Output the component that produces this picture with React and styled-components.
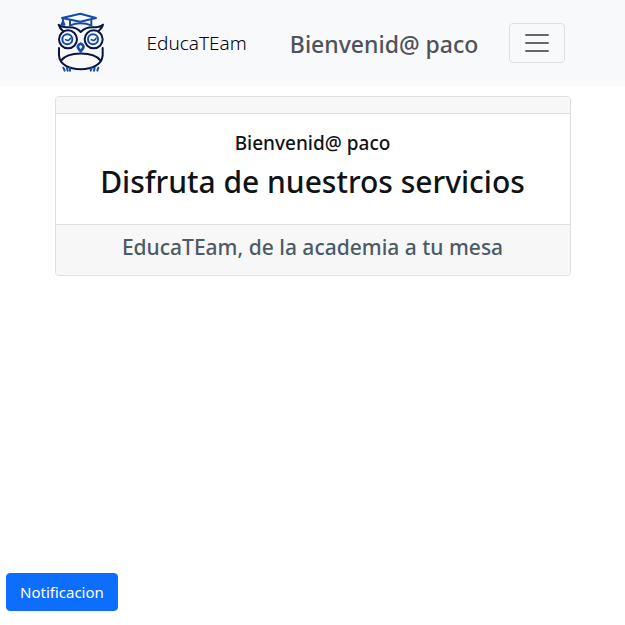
import React from "react";
import styled, { createGlobalStyle } from "styled-components";

const GlobalStyle = createGlobalStyle`
  *, *::before, *::after { box-sizing: border-box; }
  body {
    margin: 0;
    background: #fff;
    color: #212529;
    font-family: "Segoe UI", "Noto Sans", "Open Sans", sans-serif;
    font-size: 15px;
    line-height: 24px;
  }
`;

const Page = styled.div`
  display: flex;
  flex-direction: column;
  min-height: 100vh;
`;

const Navbar = styled.header`
  background: #f8f9fa;
  padding: 8px 0;
`;

const Container = styled.div`
  width: 100%;
  max-width: 540px;
  margin: 0 auto;
  padding: 0 12px;
`;

const NavRow = styled(Container)`
  display: flex;
  align-items: center;
  justify-content: space-between;
  min-height: 70px;
  padding-right: 17px;
`;

const Brand = styled.a`
  display: flex;
  align-items: center;
  gap: 40px;
  color: #000;
  font-size: 19px;
  line-height: 28px;
  font-weight: 300;
  text-decoration: none;
`;

const Logo = styled.svg`
  display: block;
  width: 52px;
  height: 70px;
  fill: none;
  stroke-linecap: round;
  stroke-linejoin: round;
`;

const Greeting = styled.span`
  color: #4f5357;
  font-size: 23px;
  line-height: 28px;
  font-weight: 500;
  margin-left: 12px;
  padding-top: 2px;
`;

const Toggler = styled.button`
  display: flex;
  align-items: center;
  justify-content: center;
  width: 56px;
  height: 40px;
  padding: 0;
  border: 1px solid #dedfe0;
  border-radius: 4px;
  background: transparent;
  cursor: pointer;
`;

const Main = styled.main`
  flex: 1;
  padding: 10px 0;
`;

const Card = styled.section`
  border: 1px solid #dfdfdf;
  border-radius: 4px;
  overflow: hidden;
  text-align: center;
`;

const CardHeader = styled.div`
  height: 17px;
  background: #f7f7f7;
  border-bottom: 1px solid #dfdfdf;
`;

const CardBody = styled.div`
  padding: 17px 16px 24px;
  color: #0f1316;
`;

const CardTitle = styled.h5`
  margin: 0 0 8px;
  font-size: 19px;
  line-height: 24px;
  font-weight: 500;
`;

const CardHeading = styled.h2`
  margin: 0;
  font-size: 30px;
  line-height: 37px;
  font-weight: 500;
`;

const CardFooter = styled.div`
  padding: 8px 16px 14px;
  border-top: 1px solid #dfdfdf;
  background: #f7f7f7;
  color: #4c5b66;
  font-size: 21px;
  line-height: 28px;
  font-weight: 500;
`;

const Footer = styled.footer`
  padding: 0 6px 14px;
`;

const NotifyButton = styled.button`
  height: 38px;
  padding: 0 13px;
  border: 1px solid #0d6efd;
  border-radius: 4px;
  background: #0d6efd;
  color: #fff;
  font: inherit;
  cursor: pointer;
`;

function OwlLogo() {
  return (
    <Logo viewBox="15 0 156 210" aria-hidden="true">
      <g stroke="#0b1640" strokeWidth="6">
        <path d="M39 69C32 63 28 58 26 50Q36 58 58 58Q80 58 92 72Q106 58 128 58Q150 58 159 50C157 59 153 63 146 69" />
        <circle cx="54" cy="94" r="27" />
        <circle cx="131" cy="94" r="27" />
        <path d="M27 120V142C29 169 56 184 92 184S156 169 158 142V120" />
        <path d="M33 158C53 129 132 129 152 158" />
      </g>
      <g stroke="#164aab" strokeWidth="6">
        <path d="M36 30L91 17L138 30L91 41Z" />
        <path d="M60 38V52Q92 40 124 52V38M39 32V42" />
        <path d="M39 39L35 50H43Z" fill="#164aab" />
        <circle cx="52" cy="94" r="15" />
        <circle cx="129" cy="94" r="15" />
        <path d="M47 95Q56 101 61 91M124 95Q133 101 138 91" strokeWidth="5" />
        <path d="M92 107C79 114 82 119 92 130C102 119 105 114 92 107Z" strokeWidth="8" />
        <path d="M40 179L44 188M51 179L53 188M60 179V188M125 179L122 188M134 179L132 188M145 179L142 188" strokeWidth="6" />
      </g>
    </Logo>
  );
}

export default function App() {
  return (
    <>
      <GlobalStyle />
      <Page>
        <Navbar>
          <NavRow as="nav">
            <Brand href="#">
              <OwlLogo />
              EducaTEam
            </Brand>
            <Greeting>Bienvenid@ paco</Greeting>
            <Toggler type="button" aria-label="Abrir menú">
              <svg width="30" height="30" viewBox="0 0 30 30" aria-hidden="true">
                <path d="M4 7h22M4 15h22M4 23h22" stroke="#646566" strokeWidth="2" strokeLinecap="round" />
              </svg>
            </Toggler>
          </NavRow>
        </Navbar>
        <Main>
          <Container>
            <Card>
              <CardHeader />
              <CardBody>
                <CardTitle>Bienvenid@ paco</CardTitle>
                <CardHeading>Disfruta de nuestros servicios</CardHeading>
              </CardBody>
              <CardFooter>EducaTEam, de la academia a tu mesa</CardFooter>
            </Card>
          </Container>
        </Main>
        <Footer>
          <NotifyButton type="button">Notificacion</NotifyButton>
        </Footer>
      </Page>
    </>
  );
}
